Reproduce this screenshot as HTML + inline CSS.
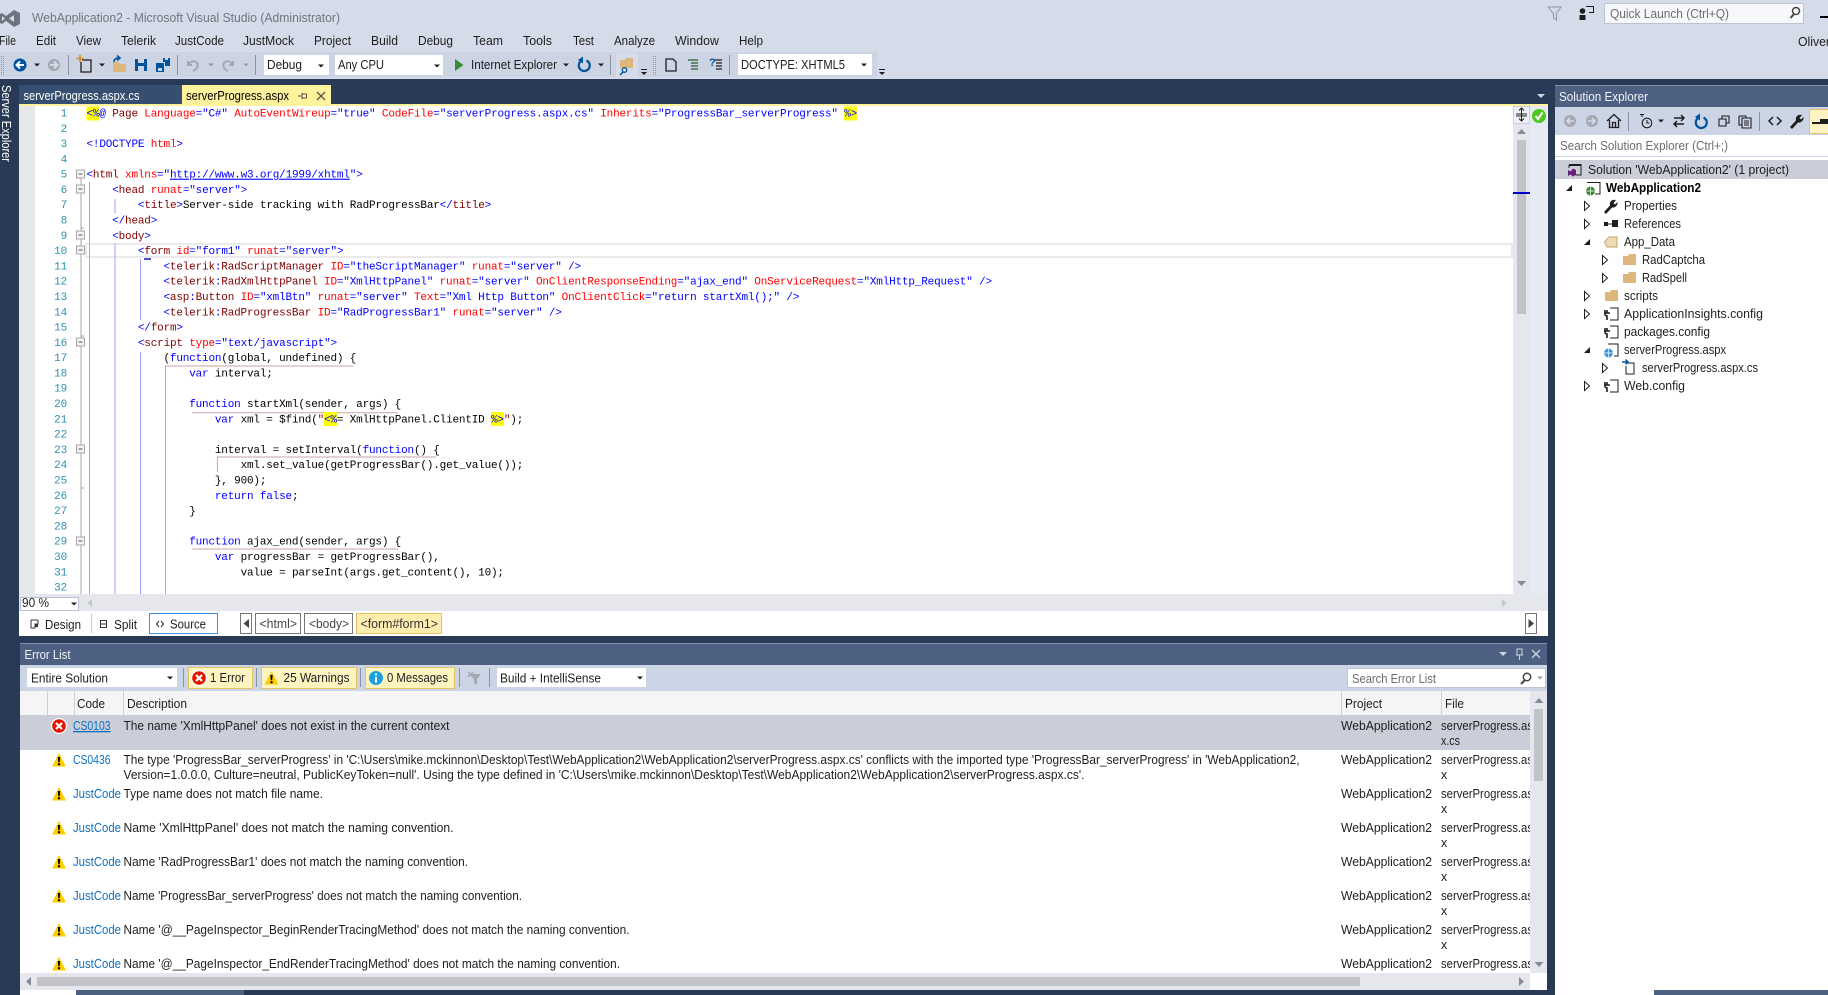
<!DOCTYPE html>
<html><head><meta charset="utf-8"><title>WebApplication2 - Microsoft Visual Studio</title>
<style>
html,body{margin:0;padding:0;width:1828px;height:995px;overflow:hidden;background:#293a56}
svg{display:block;position:absolute;left:0;top:0}
text{font-family:"Liberation Sans",sans-serif;font-size:12.5px;fill:#1e1e1e}
.t{font-size:13px}
.c text,text.c{font-family:"Liberation Mono",monospace;font-size:11px;letter-spacing:-.18px;fill:#000;white-space:pre}
.n text{font-family:"Liberation Mono",monospace;font-size:11px;letter-spacing:-.18px;fill:#2b91af;text-anchor:end}
tspan.k{fill:#0000ff}tspan.m{fill:#800000}tspan.r{fill:#ff0000}tspan.u{fill:#0000ff;text-decoration:underline}
.l{fill:#0e70c0}
.d{fill:#1e1e1e}
</style></head><body>
<svg width="1828" height="995" viewBox="0 0 1828 995" xmlns="http://www.w3.org/2000/svg">
<defs>
<g id="warn"><path d="M0-7L7 6.500H-7Z" fill="#ffcc00"/><path d="M-1.200-3H1.200L.7 2.200H-.7ZM-1.100 3.200H1.100V5.200H-1.100Z" fill="#000"/></g>
<g id="err"><circle r="8" fill="#fff"/><circle r="6.8" fill="#e51400"/><path d="M-3-3L3 3M3-3L-3 3" stroke="#fff" stroke-width="2.2"/></g>
<g id="info"><circle r="7" fill="#1ba1e2"/><path d="M-1-4.500H1V-2.600H-1ZM-1-1H1V4.800H-1Z" fill="#fff"/></g>
<path id="da" d="M-3-1.500H3L0 1.500Z" fill="#1e1e1e"/>
<path id="dg" d="M-3-1.500H3L0 1.500Z" fill="#9a9da6"/>
<g id="ov"><rect x="-3" y="-2" width="6" height="1" fill="#1e1e1e"/><path d="M-3 1H3L0 4Z" fill="#1e1e1e"/></g>
<rect id="box" x="-4" y="-4" width="8" height="8" fill="#fff" stroke="#a5a5a5"/>
<g id="cbx"><rect x="-4" y="-4" width="8" height="8" fill="#f4f4f4" stroke="#a5a5a5"/><path d="M-2 0H2" stroke="#555"/></g>
<path id="ho" d="M-2.500-4.500L2.500 0L-2.500 4.500Z" fill="#fff" stroke="#1e1e1e"/>
<path id="fi" d="M3-3V3H-3Z" fill="#1e1e1e"/>
<path id="fold" d="M0 2H5L6 0H13V11H0Z" fill="#dcb67a"/>
<g id="cfg"><path d="M5-6H13V6H5" fill="none" stroke="#1e1e1e"/><path d="M2-3V0H0V-3M-1 0H5M0 0V1C0 3 2 3 2 3V7" fill="none" stroke="#1e1e1e" stroke-width="1.6" transform="translate(0,-1)"/></g>
</defs>

<!-- top chrome -->
<rect width="1828" height="79" fill="#d6dbe9"/>
<rect y="52" width="877" height="25" fill="#ccd3e3"/>
<path fill-rule="evenodd" d="M14 10L20 13V24L14 27L6 21L2 24L0 23V14L2 13L6 16ZM14 15L9 18.5L14 22ZM2 16V21L5 18.5Z" fill="#6e7380"/>
<text x="32" y="22" textLength="308" lengthAdjust="spacingAndGlyphs" class="t" style="fill:#70757f">WebApplication2 - Microsoft Visual Studio (Administrator)</text>
<g class="t">
<text x="-1" y="45" textLength="17" lengthAdjust="spacingAndGlyphs">File</text>
<text x="36" y="45" textLength="20" lengthAdjust="spacingAndGlyphs">Edit</text>
<text x="76" y="45" textLength="25" lengthAdjust="spacingAndGlyphs">View</text>
<text x="121" y="45" textLength="35" lengthAdjust="spacingAndGlyphs">Telerik</text>
<text x="175" y="45" textLength="49" lengthAdjust="spacingAndGlyphs">JustCode</text>
<text x="243" y="45" textLength="51" lengthAdjust="spacingAndGlyphs">JustMock</text>
<text x="314" y="45" textLength="37" lengthAdjust="spacingAndGlyphs">Project</text>
<text x="371" y="45" textLength="27" lengthAdjust="spacingAndGlyphs">Build</text>
<text x="418" y="45" textLength="35" lengthAdjust="spacingAndGlyphs">Debug</text>
<text x="473" y="45" textLength="30" lengthAdjust="spacingAndGlyphs">Team</text>
<text x="523" y="45" textLength="29" lengthAdjust="spacingAndGlyphs">Tools</text>
<text x="573" y="45" textLength="21" lengthAdjust="spacingAndGlyphs">Test</text>
<text x="614" y="45" textLength="41" lengthAdjust="spacingAndGlyphs">Analyze</text>
<text x="675" y="45" textLength="44" lengthAdjust="spacingAndGlyphs">Window</text>
<text x="739" y="45" textLength="24" lengthAdjust="spacingAndGlyphs">Help</text>
</g>
<!-- quick launch -->
<path d="M1548 7H1561L1556.500 13.500V20L1553.500 18V13.500Z" fill="none" stroke="#8f95a3"/>
<path d="M1586 6.500H1593.500V12.500H1589" fill="none" stroke="#1e1e1e"/><circle cx="1582.500" cy="11" r="2.800" fill="#1e1e1e"/><path d="M1579.500 20V15H1585.500V20Z" fill="#1e1e1e"/>
<rect x="1604.500" y="3.500" width="199" height="20" fill="#f7f8fb" stroke="#bcc3d2"/>
<text x="1610" y="18" textLength="119" lengthAdjust="spacingAndGlyphs" style="fill:#6d6d6d">Quick Launch (Ctrl+Q)</text>
<circle cx="1796" cy="11" r="3.500" fill="none" stroke="#444" stroke-width="1.500"/><path d="M1794 14L1790.500 18" stroke="#444" stroke-width="2"/>
<rect x="1820" y="16" width="8" height="2" fill="#000"/>
<text x="1798" y="46" textLength="32" lengthAdjust="spacingAndGlyphs">Oliver</text>

<!-- toolbar -->
<path d="M1.500 56V76M3.500 56V76" stroke="#8f95a5" stroke-dasharray="1 1"/>
<circle cx="20" cy="65" r="6.500" fill="#00539c"/><path d="M24 65H17M20 61.500L16.500 65L20 68.500" fill="none" stroke="#fff" stroke-width="2"/>
<use href="#da" x="37" y="65"/>
<circle cx="54" cy="65" r="6" fill="#a5a8b0"/><path d="M50 65H57M54 61.500L57.500 65L54 68.500" fill="none" stroke="#d6dbe9" stroke-width="2"/>
<rect x="68" y="55" width="1" height="20" fill="#8c93a3"/>
<path d="M82 60H91V72H81V62" fill="#ccd3e3" stroke="#1e1e1e" stroke-width="1.300"/><path d="M80 55V62M76.500 58.500H83.500" stroke="#d98c1f" stroke-width="1.600"/>
<use href="#da" x="102" y="65"/>
<path d="M113 62H118L120 64H126V72H113Z" fill="#dcb67a"/><path d="M114 62C114 59 116 58 119 58M117 55.500L120 58L117 60.500" fill="none" stroke="#00539c" stroke-width="1.600"/>
<path d="M135 59H147V71H135Z" fill="#00539c"/><rect x="138" y="59" width="6" height="4" fill="#ccd3e3"/><rect x="138" y="66" width="6" height="5" fill="#ccd3e3"/>
<path d="M156 63H164V72H156Z" fill="#00539c"/><path d="M163 58H170V66H165V62H163Z" fill="#00539c"/><rect x="158" y="68" width="4" height="3" fill="#ccd3e3"/><rect x="165" y="58" width="3" height="2" fill="#ccd3e3"/>
<rect x="177" y="55" width="1" height="20" fill="#8c93a3"/>
<path d="M188 61V65H192M188.500 64.500C191 59.500 199 60.500 197.500 66.500C197 68.500 195 70 193 71" fill="none" stroke="#a5a8b0" stroke-width="2"/>
<use href="#dg" x="211" y="65"/>
<path d="M233 61V65H229M232.500 64.500C230 59.500 222 60.500 223.500 66.500C224 68.500 226 70 228 71" fill="none" stroke="#a5a8b0" stroke-width="2"/>
<use href="#dg" x="246" y="65"/>
<rect x="255" y="55" width="1" height="20" fill="#8c93a3"/>
<rect x="264" y="55" width="65" height="20" fill="#fff"/>
<text x="267" y="69" textLength="35" lengthAdjust="spacingAndGlyphs">Debug</text><use href="#da" x="321" y="66"/>
<rect x="335" y="55" width="108" height="20" fill="#fff"/>
<text x="338" y="69" textLength="46" lengthAdjust="spacingAndGlyphs">Any CPU</text><use href="#da" x="437" y="66"/>
<path d="M455 59L463.500 65L455 71Z" fill="#388a34"/>
<text x="471" y="69" textLength="86" lengthAdjust="spacingAndGlyphs">Internet Explorer</text>
<use href="#da" x="566" y="65"/>
<path d="M586.500 60.500A5.500 5.500 0 1 1 580.500 61.500" fill="none" stroke="#00539c" stroke-width="2.200"/><path d="M583 56.500V63.500L578 60Z" fill="#00539c"/>
<use href="#da" x="601" y="65"/>
<rect x="610" y="55" width="1" height="20" fill="#8c93a3"/>
<rect x="616" y="53" width="22" height="24" fill="#d6dbe9"/>
<path d="M620 60H625L626 58H633V68H620Z" fill="#dcb67a"/><circle cx="624.500" cy="70" r="2.300" fill="none" stroke="#00539c" stroke-width="1.300"/><path d="M623 72L620 75" stroke="#00539c" stroke-width="1.500"/>
<use href="#ov" x="644" y="71"/>
<path d="M653.500 56V76M655.500 56V76" stroke="#8f95a5" stroke-dasharray="1 1"/>
<path d="M666 59H673L676 62V71H666Z" fill="none" stroke="#1e1e1e" stroke-width="1.300"/>
<path d="M688 60H698M691 63H698M691 66H698M691 69H698" stroke="#2b5d33" stroke-width="1.200"/>
<text x="709" y="66" style="font-size:11px;font-weight:bold;fill:#00539c">?</text><path d="M715 60H722M716 63H722M716 66H722M716 69H722" stroke="#1e1e1e" stroke-width="1.200"/>
<rect x="729" y="55" width="1" height="20" fill="#8c93a3"/>
<rect x="738" y="54" width="134" height="21" fill="#fff"/>
<text x="741" y="69" textLength="104" lengthAdjust="spacingAndGlyphs">DOCTYPE: XHTML5</text><use href="#da" x="864" y="65"/>
<use href="#ov" x="882" y="71"/>

<!-- document tabs -->
<rect x="19" y="85" width="163" height="19" fill="#364e6f"/>
<text x="23.500" y="100" textLength="116" lengthAdjust="spacingAndGlyphs" style="fill:#fff">serverProgress.aspx.cs</text>
<rect x="182" y="85" width="149" height="19" fill="#fff29d"/>
<text x="186" y="100" textLength="103" lengthAdjust="spacingAndGlyphs" style="fill:#000">serverProgress.aspx</text>
<path d="M298 96H302M302 93V99M302 94H306.500V98H302" fill="none" stroke="#5a5a4a"/>
<path d="M317 92L325 100M325 92L317 100" stroke="#5a5a4a" stroke-width="1.400"/>
<rect x="19" y="104" width="1529" height="2" fill="#fff29d"/>
<path d="M1537 94H1545L1541 98Z" fill="#ced4e0"/>
<text transform="translate(2,85) rotate(90)" textLength="77" lengthAdjust="spacingAndGlyphs" style="fill:#fff">Server Explorer</text>

<!-- editor -->
<rect x="19" y="106" width="1494" height="488" fill="#fff"/>
<rect x="19" y="106" width="16" height="488" fill="#e6e7e8"/>
<rect x="1513" y="106" width="17" height="488" fill="#e6e7ed"/>
<rect x="1530" y="106" width="18" height="488" fill="#e5eaf5"/>
<rect x="1513.500" y="106.500" width="16" height="17" fill="#eef1f8" stroke="#c8cede"/>
<path d="M1521.500 108V121M1516 114H1527M1516 116H1527M1519 110.500L1521.500 108L1524 110.500M1519 118.500L1521.500 121L1524 118.500" fill="none" stroke="#1e1e1e"/>
<circle cx="1539" cy="116" r="7" fill="#4ec820"/><path d="M1535.500 116L1538 119L1542.500 112.500" fill="none" stroke="#fff" stroke-width="2"/>
<path d="M1517 134H1526L1521.500 129Z" fill="#868999"/>
<rect x="1517" y="140" width="9" height="174" fill="#c2c3c9"/>
<rect x="1513" y="192" width="17" height="2" fill="#0000c8"/>
<path d="M1517 581H1526L1521.500 586Z" fill="#868999"/>

<!-- current line -->
<rect x="86" y="244" width="1426" height="13" fill="none" stroke="#eaeaea" stroke-width="2"/>
<!-- outlining -->
<path d="M81 178V594M81 228H84M81 336H84M81 488H84" fill="none" stroke="#a5a5a5"/>
<use href="#box" x="80.500" y="174"/><use href="#cbx" x="80.500" y="174"/>
<use href="#cbx" x="80.500" y="189"/><use href="#cbx" x="80.500" y="235"/><use href="#cbx" x="80.500" y="250"/>
<use href="#cbx" x="80.500" y="342"/><use href="#cbx" x="80.500" y="449"/><use href="#cbx" x="80.500" y="541"/>
<!-- indent guides -->
<path d="M89.500 182V594M115 199V213M115 243V594M140.500 259V320M140.500 352V594" stroke="#a0a0ff" fill="none"/>
<rect x="144" y="258" width="7" height="2" fill="#5050d0"/>
<!-- adornments -->
<path d="M353 366H165.500V594M192 412.700H398M217.400 472V457H436M192 549H398" fill="none" stroke="#c8a5a5"/>
<!-- yellow -->
<g fill="#ffff00">
<rect x="86.500" y="106.500" width="12.800" height="14"/><rect x="844" y="106.500" width="12.800" height="14"/>
<rect x="324" y="412" width="12.800" height="14"/><rect x="491" y="412" width="12.800" height="14"/>
</g>
<g class="n">
<text x="67" y="116.500">1</text><text x="67" y="131.800">2</text><text x="67" y="147.100">3</text><text x="67" y="162.400">4</text><text x="67" y="177.700">5</text><text x="67" y="192.900">6</text><text x="67" y="208.200">7</text><text x="67" y="223.500">8</text><text x="67" y="238.800">9</text><text x="67" y="254.100">10</text><text x="67" y="269.400">11</text><text x="67" y="284.700">12</text><text x="67" y="300">13</text><text x="67" y="315.300">14</text><text x="67" y="330.600">15</text><text x="67" y="345.900">16</text><text x="67" y="361.100">17</text><text x="67" y="376.400">18</text><text x="67" y="391.700">19</text><text x="67" y="407">20</text><text x="67" y="422.300">21</text><text x="67" y="437.600">22</text><text x="67" y="452.900">23</text><text x="67" y="468.200">24</text><text x="67" y="483.500">25</text><text x="67" y="498.800">26</text><text x="67" y="514.100">27</text><text x="67" y="529.400">28</text><text x="67" y="544.700">29</text><text x="67" y="560">30</text><text x="67" y="575.300">31</text><text x="67" y="590.500">32</text>
</g>
<g class="c">
<text x="86.500" y="116.500"><tspan class="k">&lt;%</tspan><tspan class="k">@</tspan> <tspan class="m">Page</tspan> <tspan class="r">Language</tspan><tspan class="k">="C#"</tspan> <tspan class="r">AutoEventWireup</tspan><tspan class="k">="true"</tspan> <tspan class="r">CodeFile</tspan><tspan class="k">="serverProgress.aspx.cs"</tspan> <tspan class="r">Inherits</tspan><tspan class="k">="ProgressBar_serverProgress"</tspan> <tspan class="k">%&gt;</tspan></text>
<text x="86.500" y="147.100"><tspan class="k">&lt;!DOCTYPE</tspan> <tspan class="r">html</tspan><tspan class="k">&gt;</tspan></text>
<text x="86.500" y="177.700"><tspan class="k">&lt;</tspan><tspan class="m">html</tspan> <tspan class="r">xmlns</tspan><tspan class="k">="</tspan><tspan class="u">http://www.w3.org/1999/xhtml</tspan><tspan class="k">"&gt;</tspan></text>
<text x="112.200" y="192.900"><tspan class="k">&lt;</tspan><tspan class="m">head</tspan> <tspan class="r">runat</tspan><tspan class="k">="server"&gt;</tspan></text>
<text x="137.900" y="208.200"><tspan class="k">&lt;</tspan><tspan class="m">title</tspan><tspan class="k">&gt;</tspan>Server-side tracking with RadProgressBar<tspan class="k">&lt;/</tspan><tspan class="m">title</tspan><tspan class="k">&gt;</tspan></text>
<text x="112.200" y="223.500"><tspan class="k">&lt;/</tspan><tspan class="m">head</tspan><tspan class="k">&gt;</tspan></text>
<text x="112.200" y="238.800"><tspan class="k">&lt;</tspan><tspan class="m">body</tspan><tspan class="k">&gt;</tspan></text>
<text x="137.900" y="254.100"><tspan class="k">&lt;</tspan><tspan class="m">form</tspan> <tspan class="r">id</tspan><tspan class="k">="form1"</tspan> <tspan class="r">runat</tspan><tspan class="k">="server"&gt;</tspan></text>
<text x="163.500" y="269.400"><tspan class="k">&lt;</tspan><tspan class="m">telerik</tspan><tspan class="k">:</tspan><tspan class="m">RadScriptManager</tspan> <tspan class="r">ID</tspan><tspan class="k">="theScriptManager"</tspan> <tspan class="r">runat</tspan><tspan class="k">="server"</tspan> <tspan class="k">/&gt;</tspan></text>
<text x="163.500" y="284.700"><tspan class="k">&lt;</tspan><tspan class="m">telerik</tspan><tspan class="k">:</tspan><tspan class="m">RadXmlHttpPanel</tspan> <tspan class="r">ID</tspan><tspan class="k">="XmlHttpPanel"</tspan> <tspan class="r">runat</tspan><tspan class="k">="server"</tspan> <tspan class="r">OnClientResponseEnding</tspan><tspan class="k">="ajax_end"</tspan> <tspan class="r">OnServiceRequest</tspan><tspan class="k">="XmlHttp_Request"</tspan> <tspan class="k">/&gt;</tspan></text>
<text x="163.500" y="300"><tspan class="k">&lt;</tspan><tspan class="m">asp</tspan><tspan class="k">:</tspan><tspan class="m">Button</tspan> <tspan class="r">ID</tspan><tspan class="k">="xmlBtn"</tspan> <tspan class="r">runat</tspan><tspan class="k">="server"</tspan> <tspan class="r">Text</tspan><tspan class="k">="Xml Http Button"</tspan> <tspan class="r">OnClientClick</tspan><tspan class="k">="return startXml();"</tspan> <tspan class="k">/&gt;</tspan></text>
<text x="163.500" y="315.300"><tspan class="k">&lt;</tspan><tspan class="m">telerik</tspan><tspan class="k">:</tspan><tspan class="m">RadProgressBar</tspan> <tspan class="r">ID</tspan><tspan class="k">="RadProgressBar1"</tspan> <tspan class="r">runat</tspan><tspan class="k">="server"</tspan> <tspan class="k">/&gt;</tspan></text>
<text x="137.900" y="330.600"><tspan class="k">&lt;/</tspan><tspan class="m">form</tspan><tspan class="k">&gt;</tspan></text>
<text x="137.900" y="345.900"><tspan class="k">&lt;</tspan><tspan class="m">script</tspan> <tspan class="r">type</tspan><tspan class="k">="text/javascript"&gt;</tspan></text>
<text x="163.500" y="361.100">(<tspan class="k">function</tspan>(global, undefined) {</text>
<text x="189.200" y="376.400"><tspan class="k">var</tspan> interval;</text>
<text x="189.200" y="407"><tspan class="k">function</tspan> startXml(sender, args) {</text>
<text x="214.900" y="422.300"><tspan class="k">var</tspan> xml = $find(<tspan class="m">"</tspan><tspan class="k">&lt;%</tspan>= XmlHttpPanel.ClientID <tspan class="k">%&gt;</tspan><tspan class="m">"</tspan>);</text>
<text x="214.900" y="452.900">interval = setInterval(<tspan class="k">function</tspan>() {</text>
<text x="240.600" y="468.200">xml.set_value(getProgressBar().get_value());</text>
<text x="214.900" y="483.500">}, 900);</text>
<text x="214.900" y="498.800"><tspan class="k">return</tspan> <tspan class="k">false</tspan>;</text>
<text x="189.200" y="514.100">}</text>
<text x="189.200" y="544.700"><tspan class="k">function</tspan> ajax_end(sender, args) {</text>
<text x="214.900" y="560"><tspan class="k">var</tspan> progressBar = getProgressBar(),</text>
<text x="240.600" y="575.300">value = parseInt(args.get_content(), 10);</text>
</g>

<!-- editor bottom bars -->
<rect x="19" y="594" width="1529" height="17" fill="#e6e7ed"/>
<rect x="20.500" y="597.500" width="58" height="13" fill="#fff" stroke="#b9c0d4"/>
<text x="22" y="607" textLength="27" lengthAdjust="spacingAndGlyphs">90 %</text><use href="#da" x="74" y="604"/>
<path d="M92 599V607L87 603Z" fill="#c5c7cf"/>
<path d="M1502 599V607L1507 603Z" fill="#c5c7cf"/>
<rect x="19" y="611" width="1529" height="25" fill="#fff"/>
<path d="M31 620H38M31 620V628H35V624H38V620" fill="none" stroke="#333"/><rect x="35" y="624" width="3" height="3" fill="#333"/>
<text x="45" y="629" textLength="36" lengthAdjust="spacingAndGlyphs" class="t">Design</text>
<rect x="91" y="614" width="1" height="19" fill="#c8cbd3"/>
<rect x="100.500" y="620.500" width="6" height="7" fill="none" stroke="#333"/><path d="M101 624H106" stroke="#333"/>
<text x="114" y="629" textLength="23" lengthAdjust="spacingAndGlyphs" class="t">Split</text>
<rect x="149.500" y="613.500" width="68" height="20" fill="#fff" stroke="#3b8fe0"/>
<path d="M159 621L156.500 624L159 627M161 621L163.500 624L161 627" fill="none" stroke="#333"/>
<text x="170" y="628.500" textLength="36" lengthAdjust="spacingAndGlyphs" class="t">Source</text>
<rect x="240.500" y="613.500" width="11" height="20" fill="#fff" stroke="#777"/><path d="M249 619V628L243.500 623.500Z" fill="#444"/>
<rect x="255.500" y="613.500" width="45" height="20" fill="#fff" stroke="#777"/>
<text x="259.500" y="628" textLength="37.500" lengthAdjust="spacingAndGlyphs" style="fill:#444">&lt;html&gt;</text>
<rect x="304.500" y="613.500" width="48" height="20" fill="#fff" stroke="#777"/>
<text x="309" y="628" textLength="40" lengthAdjust="spacingAndGlyphs" style="fill:#444">&lt;body&gt;</text>
<rect x="356.500" y="613.500" width="85" height="20" fill="#ffedb0" stroke="#e5c365"/>
<text x="360.500" y="628" textLength="77.500" lengthAdjust="spacingAndGlyphs" style="fill:#333">&lt;form#form1&gt;</text>
<rect x="1525.500" y="613.500" width="11" height="20" fill="#fff" stroke="#777"/><path d="M1528.500 619V628L1534 623.500Z" fill="#444"/>

<!-- Error list panel -->
<rect x="20" y="643" width="1527" height="347" fill="#fff"/>
<rect x="20" y="643" width="1527" height="22" fill="#4d6082"/>
<rect x="20" y="643" width="1527" height="1" fill="#8192b0"/>
<text x="24.500" y="659" textLength="46" lengthAdjust="spacingAndGlyphs" style="fill:#f0f3f8">Error List</text>
<path d="M1499 652H1507L1503 656Z" fill="#ced4e0"/>
<path d="M1517 649H1522V655H1517ZM1516 655H1523M1519.500 655V660" fill="none" stroke="#ced4e0"/>
<path d="M1532 650L1540 658M1540 650L1532 658" stroke="#ced4e0" stroke-width="1.300"/>
<rect x="20" y="665" width="1527" height="26" fill="#ccd5e5"/>
<rect x="27" y="668" width="150" height="19" fill="#fff"/>
<text x="31" y="682.500" textLength="77" lengthAdjust="spacingAndGlyphs">Entire Solution</text><use href="#da" x="170" y="678"/>
<rect x="183" y="668" width="1" height="19" fill="#8c93a3"/>
<rect x="188.500" y="667.500" width="64" height="21" fill="#fdf4bf" stroke="#e5c365"/>
<use href="#err" x="199" y="678"/>
<text x="210" y="682" textLength="35" lengthAdjust="spacingAndGlyphs">1 Error</text>
<rect x="256" y="668" width="1" height="19" fill="#8c93a3"/>
<rect x="261.500" y="667.500" width="95" height="21" fill="#fdf4bf" stroke="#e5c365"/>
<use href="#warn" x="271.500" y="678"/>
<text x="283.500" y="682" textLength="66" lengthAdjust="spacingAndGlyphs">25 Warnings</text>
<rect x="360" y="668" width="1" height="19" fill="#8c93a3"/>
<rect x="365.500" y="667.500" width="89" height="21" fill="#fdf4bf" stroke="#e5c365"/>
<use href="#info" x="376" y="678"/>
<text x="387" y="682" textLength="61" lengthAdjust="spacingAndGlyphs">0 Messages</text>
<rect x="459" y="668" width="1" height="19" fill="#8c93a3"/>
<path d="M470 674H481L477 679V685L474 683V679Z" fill="#a5a8b0"/><path d="M468 672L473 677M473 672L468 677" stroke="#a5a8b0" stroke-width="1.500"/>
<rect x="489" y="668" width="1" height="19" fill="#8c93a3"/>
<rect x="497" y="668" width="149" height="19" fill="#fff"/>
<text x="500" y="682.500" textLength="101" lengthAdjust="spacingAndGlyphs">Build + IntelliSense</text><use href="#da" x="640" y="678"/>
<rect x="1347.500" y="668.500" width="198" height="19" fill="#fff" stroke="#bcc3d2"/>
<text x="1352" y="683" textLength="84" lengthAdjust="spacingAndGlyphs" style="fill:#6d6d6d">Search Error List</text>
<circle cx="1527" cy="677" r="3.700" fill="none" stroke="#444" stroke-width="1.500"/><path d="M1525 680L1521 684" stroke="#444" stroke-width="2"/>
<use href="#dg" x="1540" y="678"/>

<rect x="20" y="691" width="1510" height="24" fill="#f5f5f5"/>
<path d="M47.500 691V715M74.500 691V715M123.500 691V715M1341.500 691V715M1441.500 691V715" stroke="#d0d0d4"/>
<text x="77" y="708" textLength="28" lengthAdjust="spacingAndGlyphs">Code</text>
<text x="127" y="708" textLength="60" lengthAdjust="spacingAndGlyphs">Description</text>
<text x="1345" y="708" textLength="37" lengthAdjust="spacingAndGlyphs">Project</text>
<text x="1445" y="708" textLength="19" lengthAdjust="spacingAndGlyphs">File</text>
<rect x="20" y="715" width="1510" height="35" fill="#cbcdd9"/>

<use href="#err" x="59" y="726"/>
<use href="#warn" x="59" y="760"/><use href="#warn" x="59" y="794"/><use href="#warn" x="59" y="828"/><use href="#warn" x="59" y="862"/><use href="#warn" x="59" y="896"/><use href="#warn" x="59" y="930"/><use href="#warn" x="59" y="964"/>

<g class="t">
<text class="l t" x="73" y="730" textLength="37.500" lengthAdjust="spacingAndGlyphs" style="text-decoration:underline">CS0103</text>
<text class="l t" x="73" y="764" textLength="37.500" lengthAdjust="spacingAndGlyphs">CS0436</text>
<text class="l t" x="73" y="798" textLength="48" lengthAdjust="spacingAndGlyphs">JustCode</text>
<text class="l t" x="73" y="832" textLength="48" lengthAdjust="spacingAndGlyphs">JustCode</text>
<text class="l t" x="73" y="866" textLength="48" lengthAdjust="spacingAndGlyphs">JustCode</text>
<text class="l t" x="73" y="900" textLength="48" lengthAdjust="spacingAndGlyphs">JustCode</text>
<text class="l t" x="73" y="934" textLength="48" lengthAdjust="spacingAndGlyphs">JustCode</text>
<text class="l t" x="73" y="968" textLength="48" lengthAdjust="spacingAndGlyphs">JustCode</text>
<text x="123.500" y="730" textLength="326" lengthAdjust="spacingAndGlyphs">The name 'XmlHttpPanel' does not exist in the current context</text>
<text x="123.500" y="764" textLength="1176" lengthAdjust="spacingAndGlyphs">The type 'ProgressBar_serverProgress' in 'C:\Users\mike.mckinnon\Desktop\Test\WebApplication2\WebApplication2\serverProgress.aspx.cs' conflicts with the imported type 'ProgressBar_serverProgress' in 'WebApplication2,</text>
<text x="123.500" y="779" textLength="961" lengthAdjust="spacingAndGlyphs">Version=1.0.0.0, Culture=neutral, PublicKeyToken=null'. Using the type defined in 'C:\Users\mike.mckinnon\Desktop\Test\WebApplication2\WebApplication2\serverProgress.aspx.cs'.</text>
<text x="123.500" y="798" textLength="199.500" lengthAdjust="spacingAndGlyphs">Type name does not match file name.</text>
<text x="123.500" y="832" textLength="330" lengthAdjust="spacingAndGlyphs">Name 'XmlHttpPanel' does not match the naming convention.</text>
<text x="123.500" y="866" textLength="344.500" lengthAdjust="spacingAndGlyphs">Name 'RadProgressBar1' does not match the naming convention.</text>
<text x="123.500" y="900" textLength="398.500" lengthAdjust="spacingAndGlyphs">Name 'ProgressBar_serverProgress' does not match the naming convention.</text>
<text x="123.500" y="934" textLength="506" lengthAdjust="spacingAndGlyphs">Name '@__PageInspector_BeginRenderTracingMethod' does not match the naming convention.</text>
<text x="123.500" y="968" textLength="496.500" lengthAdjust="spacingAndGlyphs">Name '@__PageInspector_EndRenderTracingMethod' does not match the naming convention.</text>
<text x="1341" y="730" textLength="91" lengthAdjust="spacingAndGlyphs">WebApplication2</text>
<text x="1341" y="764" textLength="91" lengthAdjust="spacingAndGlyphs">WebApplication2</text>
<text x="1341" y="798" textLength="91" lengthAdjust="spacingAndGlyphs">WebApplication2</text>
<text x="1341" y="832" textLength="91" lengthAdjust="spacingAndGlyphs">WebApplication2</text>
<text x="1341" y="866" textLength="91" lengthAdjust="spacingAndGlyphs">WebApplication2</text>
<text x="1341" y="900" textLength="91" lengthAdjust="spacingAndGlyphs">WebApplication2</text>
<text x="1341" y="934" textLength="91" lengthAdjust="spacingAndGlyphs">WebApplication2</text>
<text x="1341" y="968" textLength="91" lengthAdjust="spacingAndGlyphs">WebApplication2</text>
<text x="1441" y="730" textLength="92" lengthAdjust="spacingAndGlyphs">serverProgress.as</text><text x="1441" y="745" textLength="19" lengthAdjust="spacingAndGlyphs">x.cs</text>
<text x="1441" y="764" textLength="92" lengthAdjust="spacingAndGlyphs">serverProgress.as</text><text x="1441" y="779">x</text>
<text x="1441" y="798" textLength="92" lengthAdjust="spacingAndGlyphs">serverProgress.as</text><text x="1441" y="813">x</text>
<text x="1441" y="832" textLength="92" lengthAdjust="spacingAndGlyphs">serverProgress.as</text><text x="1441" y="847">x</text>
<text x="1441" y="866" textLength="92" lengthAdjust="spacingAndGlyphs">serverProgress.as</text><text x="1441" y="881">x</text>
<text x="1441" y="900" textLength="92" lengthAdjust="spacingAndGlyphs">serverProgress.as</text><text x="1441" y="915">x</text>
<text x="1441" y="934" textLength="92" lengthAdjust="spacingAndGlyphs">serverProgress.as</text><text x="1441" y="949">x</text>
<text x="1441" y="968" textLength="92" lengthAdjust="spacingAndGlyphs">serverProgress.as</text>
</g>
<!-- error list scrollbars -->
<rect x="1530" y="691" width="17" height="282" fill="#e6e7ed"/>
<path d="M1534.500 703H1543.500L1539 698Z" fill="#868999"/>
<rect x="1534" y="709" width="9" height="72" fill="#c2c3c9"/>
<path d="M1534.500 962H1543.500L1539 967Z" fill="#868999"/>
<rect x="20" y="973" width="1510" height="17" fill="#e6e7ed"/>
<rect x="37" y="977" width="1323" height="9" fill="#c2c3c9"/>
<path d="M31 977V986L26 981.500Z" fill="#868999"/>
<path d="M1519 977V986L1524 981.500Z" fill="#868999"/>
<rect x="1530" y="973" width="17" height="17" fill="#fff"/>
<rect x="20" y="990" width="56" height="5" fill="#fff"/>
<rect x="76" y="990" width="168" height="5" fill="#4d6082"/>

<!-- Solution Explorer -->
<rect x="1555" y="85" width="273" height="910" fill="#fff"/>
<rect x="1555" y="85" width="273" height="22" fill="#4d6082"/>
<rect x="1555" y="85" width="273" height="1" fill="#8192b0"/>
<text x="1559" y="101" textLength="89" lengthAdjust="spacingAndGlyphs" style="fill:#f0f3f8" class="t">Solution Explorer</text>
<rect x="1555" y="107" width="273" height="28" fill="#ccd5e5"/>
<circle cx="1570" cy="121" r="6" fill="#a5a8b0"/><path d="M1574 121H1567M1570 118L1567 121L1570 124" fill="none" stroke="#d6dbe9" stroke-width="1.600"/>
<circle cx="1592" cy="121" r="6" fill="#a5a8b0"/><path d="M1588 121H1595M1592 118L1595 121L1592 124" fill="none" stroke="#d6dbe9" stroke-width="1.600"/>
<path d="M1607 121L1614 114.500L1621 121M1609.500 120V127.500H1618.500V120M1612.500 127.500V122.500H1615.500V127.500" fill="none" stroke="#1e1e1e" stroke-width="1.300"/>
<rect x="1628" y="112" width="1" height="19" fill="#8c93a3"/>
<circle cx="1647" cy="123" r="4.800" fill="none" stroke="#1e1e1e" stroke-width="1.100"/><path d="M1647 120V123H1649.500M1640 114.500H1644M1642 114.500V117" fill="none" stroke="#1e1e1e"/>
<use href="#da" x="1661" y="121"/>
<path d="M1674 118H1684M1681 115L1684 118L1681 121M1684 124H1674M1677 121L1674 124L1677 127" fill="none" stroke="#1e1e1e" stroke-width="1.500"/>
<path d="M1703.500 117.500A5.500 5.500 0 1 1 1697.500 118.500" fill="none" stroke="#00539c" stroke-width="2.200"/><path d="M1700 113.500V120.500L1695 117Z" fill="#00539c"/>
<path d="M1719 119H1726V126H1719ZM1722 119V116H1729V123H1726" fill="none" stroke="#1e1e1e" stroke-width="1.100"/>
<path d="M1739 116H1746V118M1742 118H1751V128H1742ZM1739 116V125H1742M1744 121H1749M1744 123H1749M1744 125H1749" fill="none" stroke="#1e1e1e" stroke-width="1.100"/>
<rect x="1759" y="112" width="1" height="19" fill="#8c93a3"/>
<path d="M1773 117L1769 121L1773 125M1777 117L1781 121L1777 125" fill="none" stroke="#1e1e1e" stroke-width="1.500"/>
<path d="M1790 127L1796 120.500C1795 116 1799 114 1802 115L1799.500 118L1801 119.500L1803.500 117C1804 120.500 1801 123 1798 122.500L1792 129Z" fill="#1e1e1e"/>
<rect x="1809.500" y="109.500" width="19" height="24" fill="#fff3c4" stroke="#e5c365"/>
<path d="M1812 122H1820V119H1828V124H1812Z" fill="#1e1e1e"/>
<rect x="1556" y="135" width="272" height="21" fill="#fff"/>
<text x="1560" y="150" textLength="168" lengthAdjust="spacingAndGlyphs" style="fill:#6d6d6d">Search Solution Explorer (Ctrl+;)</text>
<rect x="1555" y="156" width="273" height="1" fill="#ccd5e5"/>
<rect x="1555" y="160" width="273" height="19" fill="#cbcdd9"/>

<!-- tree -->
<path d="M1569 164.500H1581V175H1576" fill="none" stroke="#1e1e1e"/><rect x="1569" y="164" width="12" height="2" fill="#1e1e1e"/><path d="M1569 165V168" stroke="#1e1e1e"/><path d="M1568 170V176L1570.500 174.500L1573 176.500L1576 175V170L1573 168.500L1570.500 171.500Z" fill="#68217a"/>
<text x="1588" y="174" textLength="201" lengthAdjust="spacingAndGlyphs">Solution 'WebApplication2' (1 project)</text>

<use href="#fi" x="1569" y="188"/>
<path d="M1587 182.500H1600V194H1595" fill="none" stroke="#1e1e1e"/><circle cx="1590.500" cy="191" r="4.500" fill="#388a34"/><path d="M1586 191H1595M1590.500 186.500V195.500" stroke="#fff" stroke-width=".7"/>
<text x="1606" y="192" textLength="95" lengthAdjust="spacingAndGlyphs" style="font-weight:bold;fill:#000">WebApplication2</text>

<use href="#ho" x="1587" y="206"/>
<path d="M1604 212L1610 205.500C1609 201 1613 199 1616 200L1613.500 203L1615 204.500L1617.500 202C1618 205.500 1615 208 1612 207.500L1606 214Z" fill="#1e1e1e"/>
<text x="1624" y="210" textLength="53" lengthAdjust="spacingAndGlyphs">Properties</text>

<use href="#ho" x="1587" y="224"/>
<rect x="1604" y="222" width="4" height="4" fill="#1e1e1e"/><rect x="1612" y="220" width="6" height="7" fill="#1e1e1e"/><path d="M1608 224H1612" stroke="#1e1e1e"/>
<text x="1624" y="228" textLength="57" lengthAdjust="spacingAndGlyphs">References</text>

<use href="#fi" x="1587" y="242"/>
<path d="M1604.500 242L1609 237H1617V247H1607Z" fill="#eedbb8" stroke="#c9a66b"/>
<text x="1624" y="246" textLength="51" lengthAdjust="spacingAndGlyphs">App_Data</text>

<use href="#ho" x="1605" y="260"/><use href="#fold" x="1623" y="254"/>
<text x="1642" y="264" textLength="63" lengthAdjust="spacingAndGlyphs">RadCaptcha</text>
<use href="#ho" x="1605" y="278"/><use href="#fold" x="1623" y="272"/>
<text x="1642" y="282" textLength="45" lengthAdjust="spacingAndGlyphs">RadSpell</text>
<use href="#ho" x="1587" y="296"/><use href="#fold" x="1605" y="290"/>
<text x="1624" y="300" textLength="34" lengthAdjust="spacingAndGlyphs">scripts</text>
<use href="#ho" x="1587" y="314"/><use href="#cfg" x="1605" y="314"/>
<text x="1624" y="318" textLength="139" lengthAdjust="spacingAndGlyphs">ApplicationInsights.config</text>
<use href="#cfg" x="1605" y="332"/>
<text x="1624" y="336" textLength="86" lengthAdjust="spacingAndGlyphs">packages.config</text>
<use href="#fi" x="1587" y="350"/>
<path d="M1608 344H1618V356H1614" fill="none" stroke="#1e1e1e"/><circle cx="1608.500" cy="353" r="4.500" fill="#3a96dd"/><path d="M1604 353H1613M1608.500 348.500V357.500" stroke="#fff" stroke-width=".7"/>
<text x="1624" y="354" textLength="102" lengthAdjust="spacingAndGlyphs">serverProgress.aspx</text>
<use href="#ho" x="1605" y="368"/>
<path d="M1627 363H1634V374H1626V366" fill="none" stroke="#1e1e1e"/><path d="M1622 362H1628M1625.500 359.500L1628 362L1625.500 364.500" fill="none" stroke="#00539c" stroke-width="1.500"/>
<text x="1642" y="372" textLength="116" lengthAdjust="spacingAndGlyphs">serverProgress.aspx.cs</text>
<use href="#ho" x="1587" y="386"/><use href="#cfg" x="1605" y="386"/>
<text x="1624" y="390" textLength="61" lengthAdjust="spacingAndGlyphs">Web.config</text>

<rect x="1654" y="990" width="174" height="5" fill="#4d6082"/>
</svg>
</body></html>
